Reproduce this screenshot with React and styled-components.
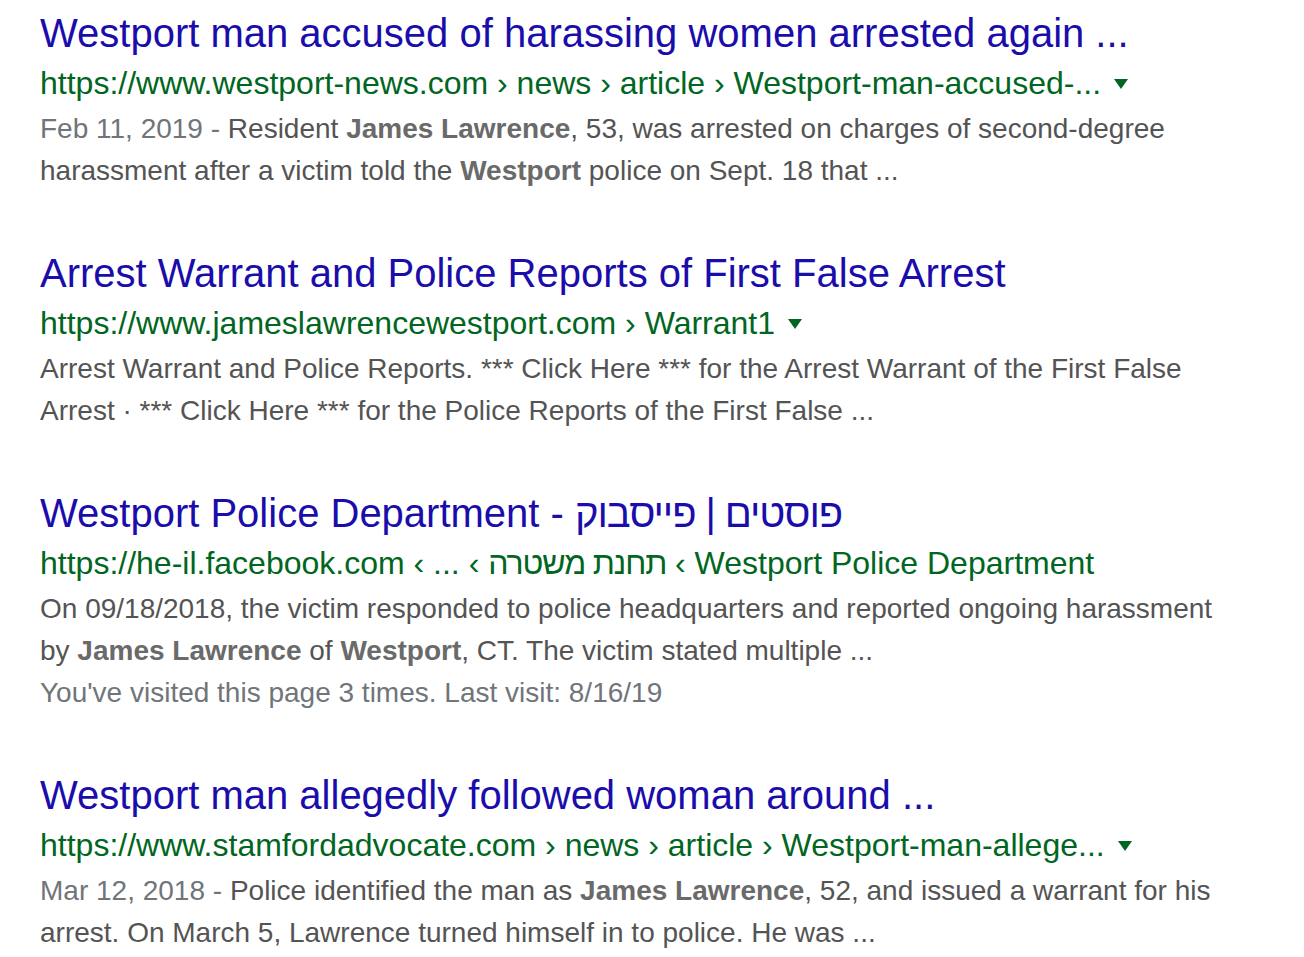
import React from 'react';
import styled, { createGlobalStyle } from 'styled-components';

const GlobalStyle = createGlobalStyle`
    body {
        margin: 0;
        background: #fff;
        font-family: "Liberation Sans", Arial, "Noto Sans", sans-serif;
    }
`

const Page = styled.div`
    display: flex;
    flex-direction: column;
    gap: 57px;
    padding: 9px 0 0 40px;
`

const Result = styled.div`
    display: flex;
    flex-direction: column;
`

const Title = styled.a`
    font-size: 40px;
    line-height: 48px;
    color: #1a0dab;
    text-decoration: none;
    white-space: nowrap;
`

const Hebrew = styled.span`
    letter-spacing: -1.1px;
`

const Cite = styled.div`
    display: flex;
    align-items: center;
    margin-top: 4px;
    font-size: 32px;
    line-height: 44px;
    color: #006621;
    white-space: nowrap;
`

const Arrow = styled.span`
    display: inline-block;
    width: 0;
    height: 0;
    margin-left: 13px;
    margin-top: 2px;
    border-left: 7.5px solid transparent;
    border-right: 7.5px solid transparent;
    border-top: 10px solid #006621;
`

const Snippet = styled.div`
    margin-top: 3px;
    font-size: 28px;
    line-height: 42px;
    color: #545454;
    b {
        color: #6a6a6a;
        font-weight: bold;
    }
`

const Line = styled.div`
    white-space: nowrap;
`

const DateText = styled.span`
    color: #70757a;
`

const Visited = styled.div`
    font-size: 28px;
    line-height: 42px;
    color: #70757a;
`

const results = [
    {
        title: 'Westport man accused of harassing women arrested again ...',
        url: 'https://www.westport-news.com › news › article › Westport-man-accused-...',
        arrow: true,
        date: 'Feb 11, 2019',
        lines: [
            <>Resident <b>James Lawrence</b>, 53, was arrested on charges of second-degree</>,
            <>harassment after a victim told the <b>Westport</b> police on Sept. 18 that ...</>,
        ],
    },
    {
        title: 'Arrest Warrant and Police Reports of First False Arrest',
        url: 'https://www.jameslawrencewestport.com › Warrant1',
        arrow: true,
        lines: [
            <>Arrest Warrant and Police Reports. *** Click Here *** for the Arrest Warrant of the First False</>,
            <>Arrest · *** Click Here *** for the Police Reports of the First False ...</>,
        ],
    },
    {
        title: <>Westport Police Department - <Hebrew>פוסטים | פייסבוק</Hebrew></>,
        url: <>https://he-il.facebook.com {'\u2039'} ... {'\u2039'} <Hebrew>תחנת משטרה</Hebrew> {'\u2039'} Westport Police Department</>,
        lines: [
            <>On 09/18/2018, the victim responded to police headquarters and reported ongoing harassment</>,
            <>by <b>James Lawrence</b> of <b>Westport</b>, CT. The victim stated multiple ...</>,
        ],
        visited: "You've visited this page 3 times. Last visit: 8/16/19",
    },
    {
        title: 'Westport man allegedly followed woman around ...',
        url: 'https://www.stamfordadvocate.com › news › article › Westport-man-allege...',
        arrow: true,
        date: 'Mar 12, 2018',
        lines: [
            <>Police identified the man as <b>James Lawrence</b>, 52, and issued a warrant for his</>,
            <>arrest. On March 5, Lawrence turned himself in to police. He was ...</>,
        ],
    },
];

function App() {
    return (
        <>
            <GlobalStyle />
            <Page>
                {results.map((r, i) => (
                    <Result key={i}>
                        <Title href="#">{r.title}</Title>
                        <Cite>
                            <span>{r.url}</span>
                            {r.arrow && <Arrow />}
                        </Cite>
                        <Snippet>
                            {r.lines.map((line, j) => (
                                <Line key={j}>
                                    {j === 0 && r.date && <DateText>{r.date} - </DateText>}
                                    {line}
                                </Line>
                            ))}
                        </Snippet>
                        {r.visited && <Visited>{r.visited}</Visited>}
                    </Result>
                ))}
            </Page>
        </>
    )
}

export default App;
